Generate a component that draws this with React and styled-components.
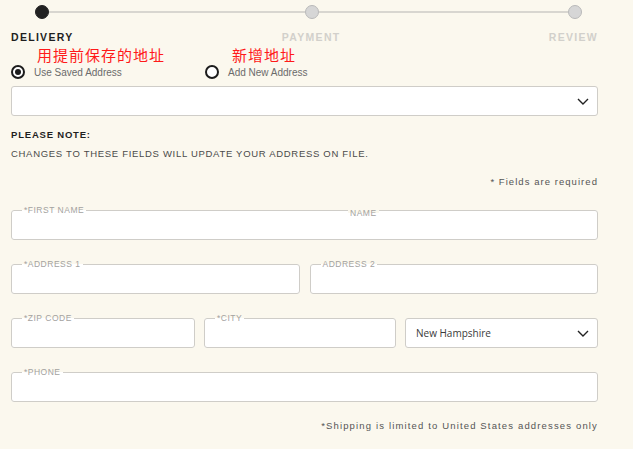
import React from 'react';
import styled, { createGlobalStyle } from 'styled-components';

const GlobalStyle = createGlobalStyle`
  html, body { margin: 0; padding: 0; background: #ffffff; }
  body { font-family: "Liberation Sans", Arial, sans-serif; }
  * { box-sizing: border-box; }
`;

const Page = styled.div`
  width: 633px;
  height: 449px;
  background: #fbf8ee;
  padding: 5px 35px 0 11px;
`;

const Track = styled.div`
  display: flex;
  align-items: center;
  padding: 0 16px 0 24px;
  height: 14px;
`;

const Dot = styled.span`
  width: 14px;
  height: 14px;
  border-radius: 50%;
  flex: none;
  background: ${p => (p.$active ? '#222222' : '#d6d6d6')};
  border: 1px solid ${p => (p.$active ? '#222222' : '#b9b9b9')};
`;

const Line = styled.span`
  height: 2px;
  background: #d8d6d0;
  flex: ${p => p.$grow};
`;

const Steps = styled.div`
  display: flex;
  justify-content: space-between;
  margin-top: 12px;
  height: 12px;
  line-height: 12px;
`;

const StepLabel = styled.span`
  font-size: 10.5px;
  font-weight: 700;
  letter-spacing: 1.3px;
  color: ${p => (p.$active ? '#1f1f1f' : '#d2d0cb')};
`;

const Options = styled.div`
  display: flex;
  align-items: center;
  margin-top: 22px;
  height: 14px;
`;

const Option = styled.label`
  position: relative;
  display: flex;
  align-items: center;
  gap: 9px;
  width: ${p => p.$width};
  font-size: 10px;
  line-height: 11px;
  color: #6b6b6b;
`;

const Radio = styled.span`
  width: 14px;
  height: 14px;
  border-radius: 50%;
  border: 2px solid #1c1c1c;
  background: #ffffff;
  display: flex;
  align-items: center;
  justify-content: center;
  flex: none;
  &::after {
    content: '';
    width: 6px;
    height: 6px;
    border-radius: 50%;
    background: ${p => (p.$checked ? '#1c1c1c' : 'transparent')};
  }
`;

const Note = styled.span`
  position: absolute;
  left: ${p => p.$left};
  top: -18px;
  font-family: "Noto Sans CJK SC", sans-serif;
  font-size: 15px;
  line-height: 15px;
  letter-spacing: 1px;
  color: #ff1a1a;
  white-space: nowrap;
`;

const SelectBox = styled.div`
  display: flex;
  align-items: center;
  justify-content: space-between;
  height: ${p => p.$height || '30px'};
  margin-top: ${p => p.$top || '0'};
  padding: 0 8px 0 10px;
  background: #ffffff;
  border: 1px solid #cfcdc8;
  border-radius: 3px;
  font-family: "Open Sans", sans-serif;
  font-size: 10px;
  color: #3a3a3a;
`;

const Heading = styled.div`
  margin-top: 13px;
  font-size: 9.5px;
  font-weight: 700;
  letter-spacing: 0.8px;
  color: #1f1f1f;
  line-height: 12px;
`;

const Text = styled.div`
  margin-top: ${p => p.$top};
  font-size: 9.5px;
  letter-spacing: ${p => p.$spacing || '1.05px'};
  color: ${p => p.$color || '#4a4a4a'};
  line-height: 12px;
  text-align: ${p => p.$align || 'left'};
`;

const Grid = styled.div`
  display: grid;
  grid-template-columns: ${p => p.$cols};
  gap: ${p => p.$gap || '10px'};
  margin-top: ${p => p.$top};
  align-items: end;
`;

const Field = styled.fieldset`
  margin: 0;
  padding: 0;
  border: 1px solid #cfcdc8;
  border-radius: 3px;
  background: #ffffff;
  min-width: 0;
  position: relative;
`;

const Legend = styled.legend`
  margin-left: 10px;
  padding: 0 2px;
  font-size: 8.5px;
  line-height: 8px;
  letter-spacing: 0.5px;
  color: #a3a2a0;
`;

const Extra = styled.span`
  position: absolute;
  left: ${p => p.$left};
  top: -5px;
  font-size: 8.5px;
  line-height: 8px;
  letter-spacing: 0.5px;
  color: #a3a2a0;
  background: linear-gradient(#fbf8ee 50%, #ffffff 50%);
  padding: 0 2px;
`;

const Inner = styled.div`
  height: 25px;
`;

const Chevron = () => (
  <svg width="12" height="7" viewBox="0 0 12 7">
    <polyline points="1,1 6,6 11,1" fill="none" stroke="#222" strokeWidth="1.4" />
  </svg>
);

const Input = ({ label, extra }) => (
  <Field>
    <Legend>{label}</Legend>
    {extra && <Extra $left="336px">{extra}</Extra>}
    <Inner />
  </Field>
);

const App = () => (
  <>
    <GlobalStyle />
    <Page>
      <Track>
        <Dot $active />
        <Line $grow={256} />
        <Dot />
        <Line $grow={249} />
        <Dot />
      </Track>
      <Steps>
        <StepLabel $active>DELIVERY</StepLabel>
        <StepLabel>PAYMENT</StepLabel>
        <StepLabel>REVIEW</StepLabel>
      </Steps>
      <Options>
        <Option $width="194px">
          <Note $left="26px">用提前保存的地址</Note>
          <Radio $checked />
          Use Saved Address
        </Option>
        <Option $width="200px">
          <Note $left="27px">新增地址</Note>
          <Radio />
          Add New Address
        </Option>
      </Options>
      <SelectBox $top="7px">
        <span />
        <Chevron />
      </SelectBox>
      <Heading>PLEASE NOTE:</Heading>
      <Text $top="7px" $spacing="0.7px">CHANGES TO THESE FIELDS WILL UPDATE YOUR ADDRESS ON FILE.</Text>
      <Text $top="16px" $align="right" $color="#555">* Fields are required</Text>
      <Grid $cols="1fr" $top="18px">
        <Input label="*FIRST NAME" extra="NAME" />
      </Grid>
      <Grid $cols="1fr 1fr" $top="20px">
        <Input label="*ADDRESS 1" />
        <Input label="ADDRESS 2" />
      </Grid>
      <Grid $cols="184px 192px 1fr" $gap="9px" $top="20px">
        <Input label="*ZIP CODE" />
        <Input label="*CITY" />
        <SelectBox>
          New Hampshire
          <Chevron />
        </SelectBox>
      </Grid>
      <Grid $cols="1fr" $top="20px">
        <Input label="*PHONE" />
      </Grid>
      <Text $top="18px" $align="right" $color="#555" $spacing="1.15px">*Shipping is limited to United States addresses only</Text>
    </Page>
  </>
);

export default App;
